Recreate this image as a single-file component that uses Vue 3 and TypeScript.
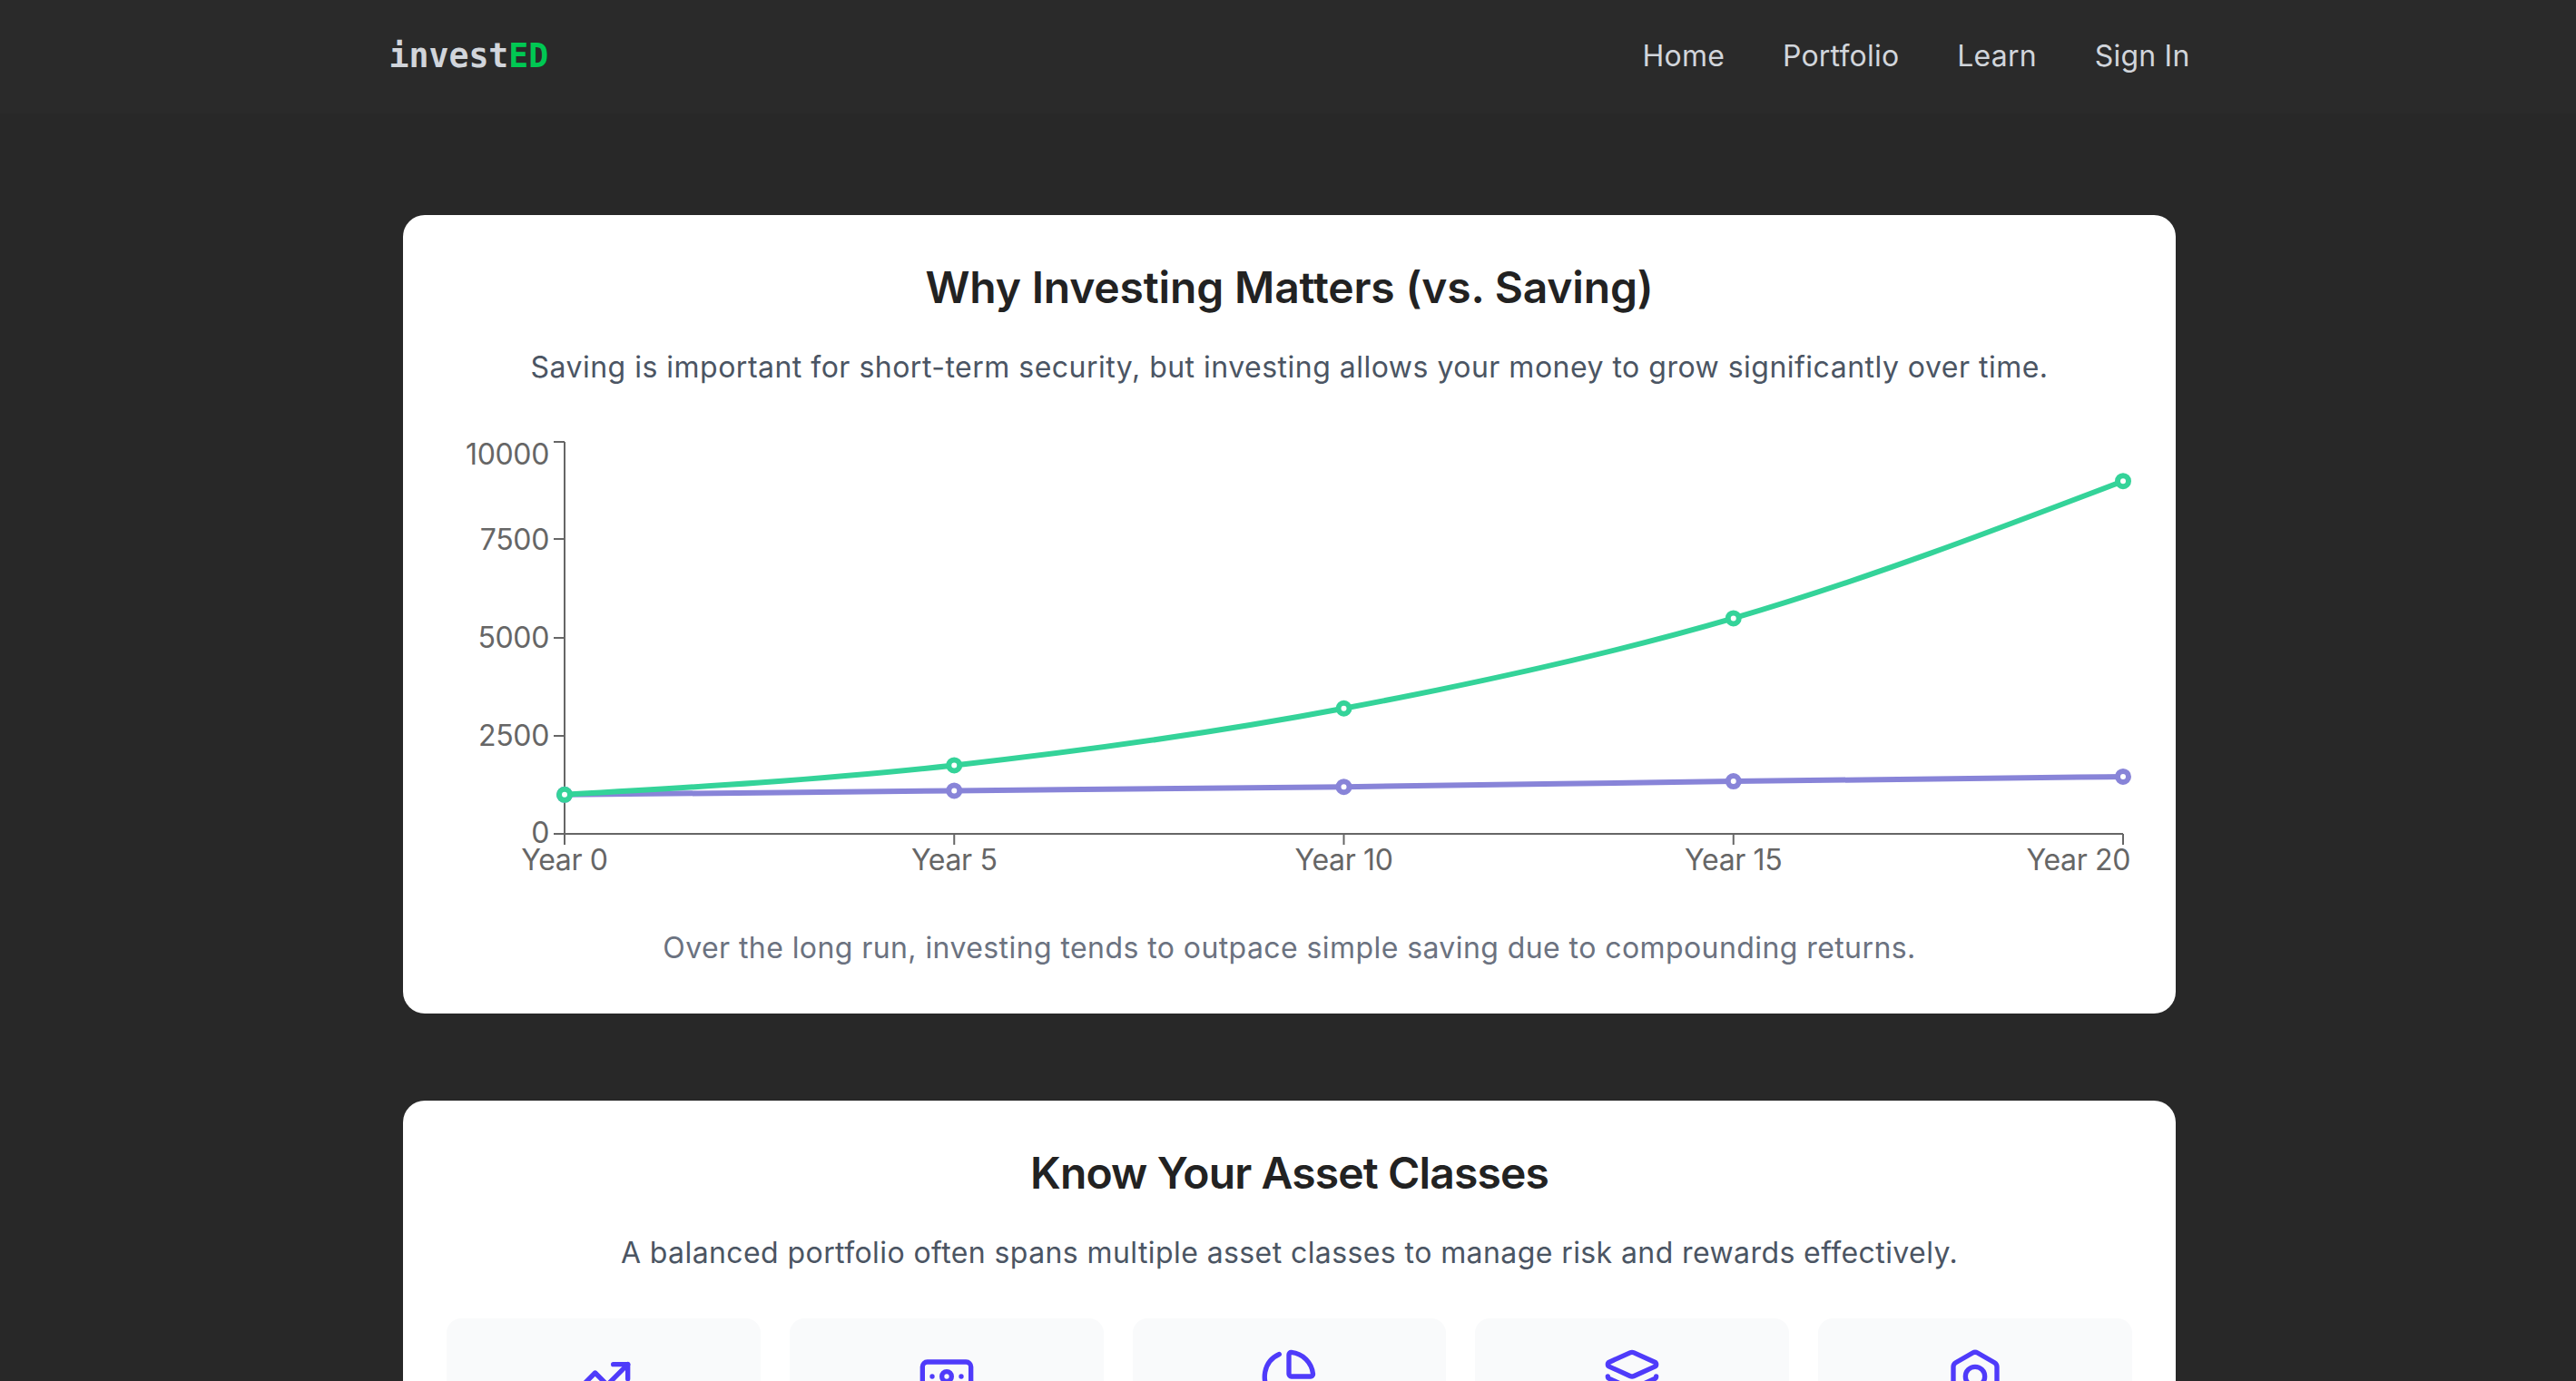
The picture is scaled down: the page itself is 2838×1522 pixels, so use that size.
<script setup lang="ts">
const navLinks: string[] = ['Home', 'Portfolio', 'Learn', 'Sign In']

const chartLeft = 130
const chartStep = 429.25
const chartBottom = 442
const pxPerUnit = 0.0432

interface Pt { x: number; y: number }

const toPoints = (values: number[]): Pt[] =>
  values.map((v, i) => ({ x: chartLeft + i * chartStep, y: chartBottom - v * pxPerUnit }))

// Monotone cubic interpolation (same shape as d3's curveMonotoneX)
function monotonePath(p: Pt[]): string {
  const n = p.length
  const dx: number[] = []
  const m: number[] = []
  for (let i = 0; i < n - 1; i++) {
    dx.push(p[i + 1].x - p[i].x)
    m.push((p[i + 1].y - p[i].y) / dx[i])
  }
  const t: number[] = new Array(n).fill(0)
  for (let i = 1; i < n - 1; i++) {
    const h0 = dx[i - 1]
    const h1 = dx[i]
    const s = (m[i - 1] * h1 + m[i] * h0) / (h0 + h1)
    t[i] = (Math.sign(m[i - 1]) + Math.sign(m[i])) * Math.min(Math.abs(m[i - 1]), Math.abs(m[i]), 0.5 * Math.abs(s))
  }
  t[0] = (3 * m[0] - t[1]) / 2
  t[n - 1] = (3 * m[n - 2] - t[n - 2]) / 2
  let d = `M${p[0].x},${p[0].y}`
  for (let i = 0; i < n - 1; i++) {
    const h = dx[i] / 3
    d += `C${p[i].x + h},${p[i].y + h * t[i]} ${p[i + 1].x - h},${p[i + 1].y - h * t[i + 1]} ${p[i + 1].x},${p[i + 1].y}`
  }
  return d
}

const series = [
  { name: 'saving', color: '#8884d8', points: toPoints([1000, 1100, 1200, 1340, 1460]) },
  { name: 'investing', color: '#34d399', points: toPoints([1000, 1750, 3200, 5500, 9000]) },
].map((s) => ({ ...s, d: monotonePath(s.points) }))

const yTicks = [
  { y: 10, base: 35, label: '10000' },
  { y: 117, base: 129, label: '7500' },
  { y: 226, base: 237, label: '5000' },
  { y: 334, base: 345, label: '2500' },
  { y: 442, base: 452, label: '0' },
]

const xTicks = [
  { x: 130, tx: 130, anchor: 'middle', label: 'Year 0' },
  { x: 559.25, tx: 559.25, anchor: 'middle', label: 'Year 5' },
  { x: 988.5, tx: 988.5, anchor: 'middle', label: 'Year 10' },
  { x: 1417.75, tx: 1417.75, anchor: 'middle', label: 'Year 15' },
  { x: 1847, tx: 1855, anchor: 'end', label: 'Year 20' },
]

const assets: string[] = ['trending', 'banknote', 'pie', 'layers', 'bolt']
</script>

<template>
  <div class="page">
    <header class="nav">
      <div class="nav-inner">
        <div class="logo">invest<span class="logo-ed">ED</span></div>
        <nav class="links">
          <a v-for="link in navLinks" :key="link" class="link">{{ link }}</a>
        </nav>
      </div>
    </header>

    <main class="main">
      <section class="card">
        <h2 class="title title-why">Why Investing Matters (vs. Saving)</h2>
        <p class="lead">
          Saving is important for short-term security, but investing allows your money to grow significantly over time.
        </p>
        <svg class="chart" viewBox="0 0 1857 512" width="1857" height="512">
          <g class="axis">
            <line :x1="130" y1="10" :x2="130" y2="442" />
            <line x1="130" y1="442" x2="1847" y2="442" />
            <line v-for="t in yTicks" :key="t.label" x1="118" :y1="t.y" x2="130" :y2="t.y" />
            <line v-for="t in xTicks" :key="t.label" :x1="t.x" y1="442" :x2="t.x" y2="454" />
          </g>
          <text v-for="t in yTicks" :key="t.label" class="tick" x="113" :y="t.base" text-anchor="end">{{ t.label }}</text>
          <text v-for="t in xTicks" :key="t.label" class="tick" :x="t.tx" y="482" :text-anchor="t.anchor">{{ t.label }}</text>
          <g v-for="s in series" :key="s.name">
            <path :d="s.d" fill="none" :stroke="s.color" stroke-width="6" />
            <circle
              v-for="(p, i) in s.points"
              :key="i"
              :cx="p.x"
              :cy="p.y"
              r="6"
              fill="#fff"
              :stroke="s.color"
              stroke-width="6"
            />
          </g>
        </svg>
        <p class="note">Over the long run, investing tends to outpace simple saving due to compounding returns.</p>
      </section>

      <section class="card">
        <h2 class="title title-assets">Know Your Asset Classes</h2>
        <p class="lead lead-assets">
          A balanced portfolio often spans multiple asset classes to manage risk and rewards effectively.
        </p>
        <div class="assets">
          <div v-for="a in assets" :key="a" class="asset">
            <svg class="icon" viewBox="0 0 24 24" width="64" height="64">
              <template v-if="a === 'trending'">
                <path d="M16 7h6v6" />
                <path d="m22 7-8.5 8.5-5-5L2 17" />
              </template>
              <template v-else-if="a === 'banknote'">
                <rect x="2" y="6" width="20" height="12" rx="2" />
                <circle cx="12" cy="12" r="2" />
                <path d="M6 12h.01M18 12h.01" />
              </template>
              <template v-else-if="a === 'pie'">
                <path d="M21 12c.552 0 1.005-.449.95-.998a10 10 0 0 0-8.953-8.951c-.55-.055-.998.398-.998.95v8a1 1 0 0 0 1 1z" />
                <path d="M21.21 15.89A10 10 0 1 1 8 2.83" />
              </template>
              <template v-else-if="a === 'layers'">
                <path d="M12.83 2.18a2 2 0 0 0-1.66 0L2.6 6.08a1 1 0 0 0 0 1.83l8.58 3.91a2 2 0 0 0 1.66 0l8.58-3.9a1 1 0 0 0 0-1.83z" />
                <path d="M2 12a1 1 0 0 0 .58.91l8.6 3.91a2 2 0 0 0 1.65 0l8.58-3.9A1 1 0 0 0 22 12" />
                <path d="M2 17a1 1 0 0 0 .58.91l8.6 3.91a2 2 0 0 0 1.65 0l8.58-3.9A1 1 0 0 0 22 17" />
              </template>
              <template v-else>
                <path d="M21 16V8a2 2 0 0 0-1-1.73l-7-4a2 2 0 0 0-2 0l-7 4A2 2 0 0 0 3 8v8a2 2 0 0 0 1 1.73l7 4a2 2 0 0 0 2 0l7-4A2 2 0 0 0 21 16z" />
                <circle cx="12" cy="12" r="4" />
              </template>
            </svg>
          </div>
        </div>
      </section>
    </main>
  </div>
</template>

<style scoped>
.page {
  height: 1522px;
  overflow: hidden;
  box-sizing: border-box;
  padding-left: 3px;
  background: #282828;
  font-family: Inter, "Liberation Sans", sans-serif;
}

.nav {
  height: 125px;
  margin-left: -3px;
  padding-left: 3px;
  background: #2a2a2a;
}

.nav-inner {
  max-width: 1984px;
  height: 100%;
  margin: 0 auto;
  display: flex;
  align-items: center;
  justify-content: space-between;
}

.logo {
  margin-top: -2px;
  font: 700 36.5px/48px "DejaVu Sans Mono", monospace;
  color: #d1d5db;
}

.logo-ed {
  color: #00c853;
}

.links {
  display: flex;
  gap: 64px;
}

.link {
  margin-top: -1px;
  font-size: 32px;
  line-height: 48px;
  letter-spacing: 0.2px;
  color: #d1d5db;
}

.main {
  max-width: 1953px;
  margin: 0 auto;
  padding-top: 112px;
  display: flex;
  flex-direction: column;
  gap: 96px;
}

.card {
  box-sizing: border-box;
  padding: 48px;
  border-radius: 24px;
  background: #fff;
}

.title {
  margin: 0 0 32px;
  font-size: 48px;
  font-weight: 600;
  line-height: 64px;
  text-align: center;
  color: #222;
}

.title-why {
  letter-spacing: -0.15px;
}

.title-assets {
  letter-spacing: -0.87px;
}

.lead {
  margin: 0 0 48px;
  font-size: 32px;
  line-height: 48px;
  letter-spacing: 0.49px;
  text-align: center;
  color: #4b5563;
}

.lead-assets {
  letter-spacing: 0.41px;
}

.chart {
  display: block;
  margin-bottom: 32px;
}

.axis line {
  stroke: #666;
  stroke-width: 2;
}

.tick {
  font-size: 32px;
  letter-spacing: -0.35px;
  fill: #666;
}

.note {
  margin: 0;
  font-size: 32px;
  line-height: 48px;
  letter-spacing: 0.42px;
  text-align: center;
  color: #6b7280;
}

.assets {
  display: grid;
  grid-template-columns: repeat(5, 1fr);
  gap: 32px;
}

.asset {
  display: flex;
  justify-content: center;
  padding: 32px 32px 96px;
  border-radius: 16px;
  background: #f9fafb;
}

.icon {
  display: block;
  fill: none;
  stroke: #4f3bfa;
  stroke-width: 2;
  stroke-linecap: round;
  stroke-linejoin: round;
}
</style>
